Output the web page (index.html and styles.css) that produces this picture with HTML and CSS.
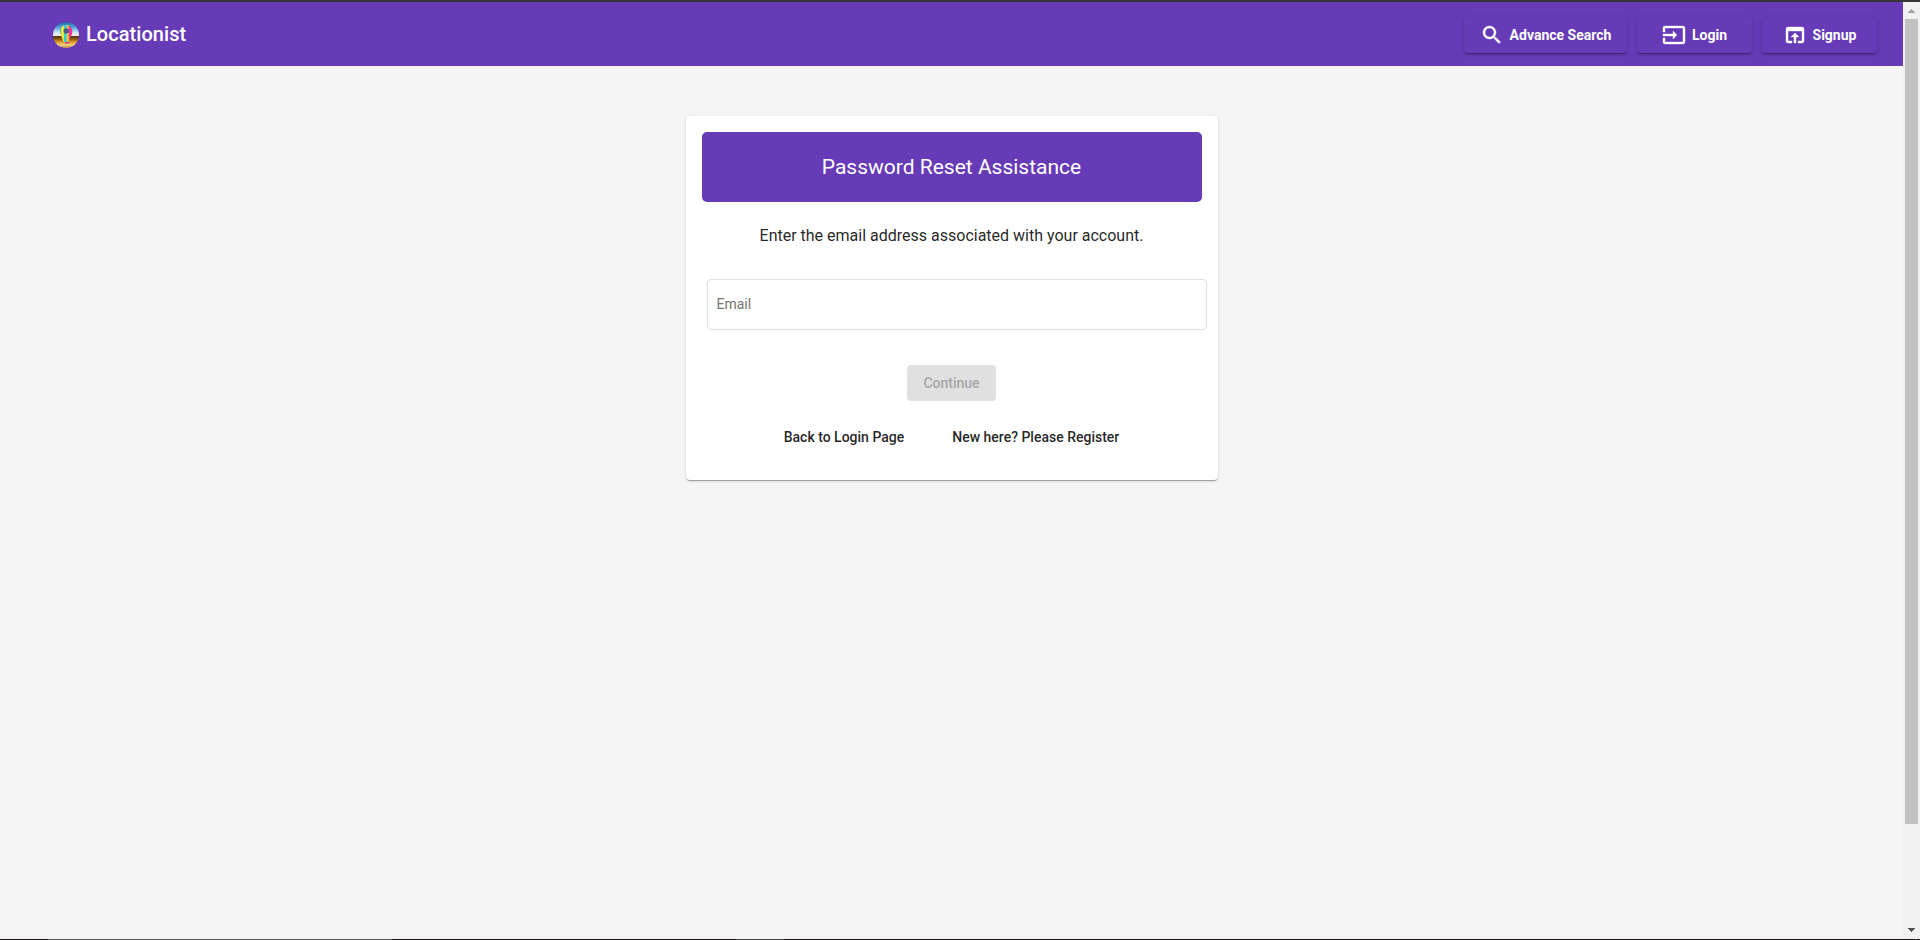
FILE: index.html
```html
<!DOCTYPE html>
<html lang="en">
<head>
<meta charset="utf-8">
<title>Locationist</title>
<link rel="stylesheet" href="styles.css">
</head>
<body>
<div class="window-edge"></div>
<div class="viewport">
  <div class="page">
    <header class="toolbar">
      <a class="brand">
        <svg class="logo" viewBox="0 0 26 26">
          <defs>
            <clipPath id="disc"><circle cx="13" cy="13" r="13"/></clipPath>
            <linearGradient id="scene" x1="0" y1="0" x2="0" y2="1">
              <stop offset="0" stop-color="#2468a4"/>
              <stop offset=".2" stop-color="#4f9fdd"/>
              <stop offset=".42" stop-color="#d8ecf6"/>
              <stop offset=".52" stop-color="#eee9df"/>
              <stop offset=".55" stop-color="#4c3517"/>
              <stop offset=".64" stop-color="#82510d"/>
              <stop offset=".76" stop-color="#d9951e"/>
              <stop offset=".88" stop-color="#f3d080"/>
              <stop offset="1" stop-color="#b98a52"/>
            </linearGradient>
            <linearGradient id="stripes" x1="0" y1="0" x2="1" y2="0">
              <stop offset="0" stop-color="#27b9aa"/>
              <stop offset=".13" stop-color="#f2e83b"/>
              <stop offset=".3" stop-color="#e9e536"/>
              <stop offset=".36" stop-color="#25d0e8"/>
              <stop offset=".5" stop-color="#35c4ee"/>
              <stop offset=".56" stop-color="#f4e52c"/>
              <stop offset=".7" stop-color="#f5a238"/>
              <stop offset=".76" stop-color="#f0359c"/>
              <stop offset="1" stop-color="#e52e91"/>
            </linearGradient>
          </defs>
          <g clip-path="url(#disc)">
            <path fill="url(#scene)" d="M0 0h26v26H0z"/>
            <path fill="url(#stripes)" d="M13 3c-4 0-5.800 3-5.800 6.500 0 4 2.300 6.500 3.300 10.500h5c1-4 3.800-6.500 3.800-10.500C19.300 6 17 3 13 3z"/>
            <path fill="#d02c86" d="M12 20h4v1.500h-4z"/>
          </g>
          <circle cx="13.300" cy="9" r="2.700" fill="#4c5787"/>
        </svg>
        <span>Locationist</span>
      </a>
      <nav class="actions">
        <a class="action search">
          <svg class="icon" viewBox="0 0 24 24"><path d="M15.500 14h-.79l-.28-.27C15.410 12.590 16 11.110 16 9.500 16 5.910 13.090 3 9.500 3S3 5.910 3 9.500 5.910 16 9.500 16c1.610 0 3.090-.59 4.230-1.570l.27.28v.79l5 4.990L20.490 19l-4.990-5zm-6 0C7.010 14 5 11.990 5 9.500S7.010 5 9.500 5 14 7.010 14 9.500 11.990 14 9.500 14z"/></svg>
          <span>Advance Search</span>
        </a>
        <a class="action login">
          <svg class="icon" viewBox="0 0 24 24"><path d="M21 3.010H3c-1.100 0-2 .9-2 2V9h2V4.990h18v14.030H3V15H1v4.010c0 1.100.9 1.980 2 1.980h18c1.100 0 2-.88 2-1.980v-14c0-1.110-.9-2-2-2zM11 16l4-4-4-4v3H1v2h10v3z"/></svg>
          <span>Login</span>
        </a>
        <a class="action signup">
          <svg class="icon" viewBox="0 0 24 24"><path d="M19 4H5c-1.110 0-2 .9-2 2v12c0 1.100.89 2 2 2h4v-2H5V8h14v10h-4v2h4c1.100 0 2-.9 2-2V6c0-1.100-.89-2-2-2zm-7 6l-4 4h3v6h2v-6h3l-4-4z"/></svg>
          <span>Signup</span>
        </a>
      </nav>
    </header>
    <main class="card">
      <h1 class="card-title">Password Reset Assistance</h1>
      <p class="hint">Enter the email address associated with your account.</p>
      <input class="email" type="email" placeholder="Email">
      <button class="continue" disabled>Continue</button>
      <div class="links">
        <a>Back to Login Page</a>
        <a>New here? Please Register</a>
      </div>
    </main>
  </div>
  <div class="scrollbar">
    <svg class="arrow" viewBox="0 0 17 17"><path fill="#a3a3a3" d="M5 11h7v-1h-1v-1h-1v-1h-1v-1h-1v1h-1v1h-1v1h-1z"/></svg>
    <div class="thumb"></div>
    <svg class="arrow down" viewBox="0 0 17 17"><path fill="#505050" d="M5 6h7v1h-1v1h-1v1h-1v1h-1v-1h-1v-1h-1v-1h-1z"/></svg>
  </div>
</div>
<div class="taskbar-edge"></div>
</body>
</html>
```
FILE: styles.css
```css
* { box-sizing: border-box; }

body {
  margin: 0;
  height: 940px;
  display: flex;
  flex-direction: column;
  overflow: hidden;
  background: #f5f5f5;
  color: rgba(0, 0, 0, .87);
  font-family: Roboto, "Liberation Sans", sans-serif;
  font-size: 14px;
}

.window-edge { height: 2px; background: #323639; }

.viewport { flex: 1; display: flex; min-height: 0; }

.page { flex: 1; }

.toolbar {
  height: 64px;
  padding: 0 26px 0 53px;
  display: flex;
  align-items: center;
  justify-content: space-between;
  background: #673ab7;
  color: #fff;
}

.brand {
  display: flex;
  align-items: center;
  gap: 7px;
  font-size: 20px;
  font-weight: 500;
  line-height: 32px;
  letter-spacing: .05px;
}

.logo { width: 26px; height: 26px; margin-top: 2px; }

.actions { display: flex; gap: 10px; }

.action {
  height: 36px;
  margin-top: 2px;
  padding-bottom: 1px;
  display: flex;
  align-items: center;
  justify-content: center;
  width: 115px;
  gap: 6px;
  border-radius: 4px;
  font-weight: 700;
  box-shadow: 0 3px 1px -2px rgba(0, 0, 0, .2), 0 2px 2px rgba(0, 0, 0, .14), 0 1px 5px rgba(0, 0, 0, .12);
}

.action.search { width: 163px; }

.icon {
  width: 24px;
  height: 24px;
  fill: currentColor;
  stroke: currentColor;
  stroke-width: .4;
}

.card {
  width: 532px;
  height: 364px;
  margin: 50px auto 0;
  padding: 16px;
  display: flex;
  flex-direction: column;
  align-items: center;
  background: #fff;
  border-radius: 4px;
  box-shadow: 0 2px 1px -1px rgba(0, 0, 0, .2), 0 1px 1px rgba(0, 0, 0, .14), 0 1px 3px rgba(0, 0, 0, .12);
}

.card-title {
  width: 100%;
  height: 70px;
  margin: 0;
  border-radius: 5px;
  background: #673ab7;
  color: #fff;
  font-size: 21px;
  font-weight: 400;
  line-height: 70px;
  text-align: center;
}

.hint { margin: 22px 0 0; font-size: 16px; line-height: 24px; }

.email {
  align-self: flex-start;
  width: 500px;
  height: 51px;
  margin: 31px 0 0 5px;
  padding: 0 9px 1px;
  border: 1px solid #e0e0e0;
  border-radius: 4px;
  background: #fff;
  font: inherit;
}

.email::placeholder { color: #757575; }

.continue {
  width: 89px;
  height: 36px;
  margin: 35px 0 0;
  padding: 0;
  border: 0;
  border-radius: 4px;
  background: #e0e0e0;
  color: #a6a6a6;
  font: 500 14px/36px Roboto, "Liberation Sans", sans-serif;
}

.links {
  margin-top: 24px;
  display: flex;
  gap: 48px;
  font-weight: 500;
  line-height: 24px;
}

.scrollbar {
  width: 17px;
  display: flex;
  flex-direction: column;
  align-items: center;
  background: #f1f1f1;
}

.arrow { width: 17px; height: 17px; }

.arrow.down { margin-top: auto; }

.thumb { width: 13px; height: 805px; background: #c1c1c1; }

.taskbar-edge {
  height: 1px;
  background: linear-gradient(to right, #171214 48px, #5a5859 48px 392px, #171214 392px 736px, #444243 736px 784px, #171214 784px 1915px, #5a5859 1915px 1916px, #171214 1916px);
}
```
